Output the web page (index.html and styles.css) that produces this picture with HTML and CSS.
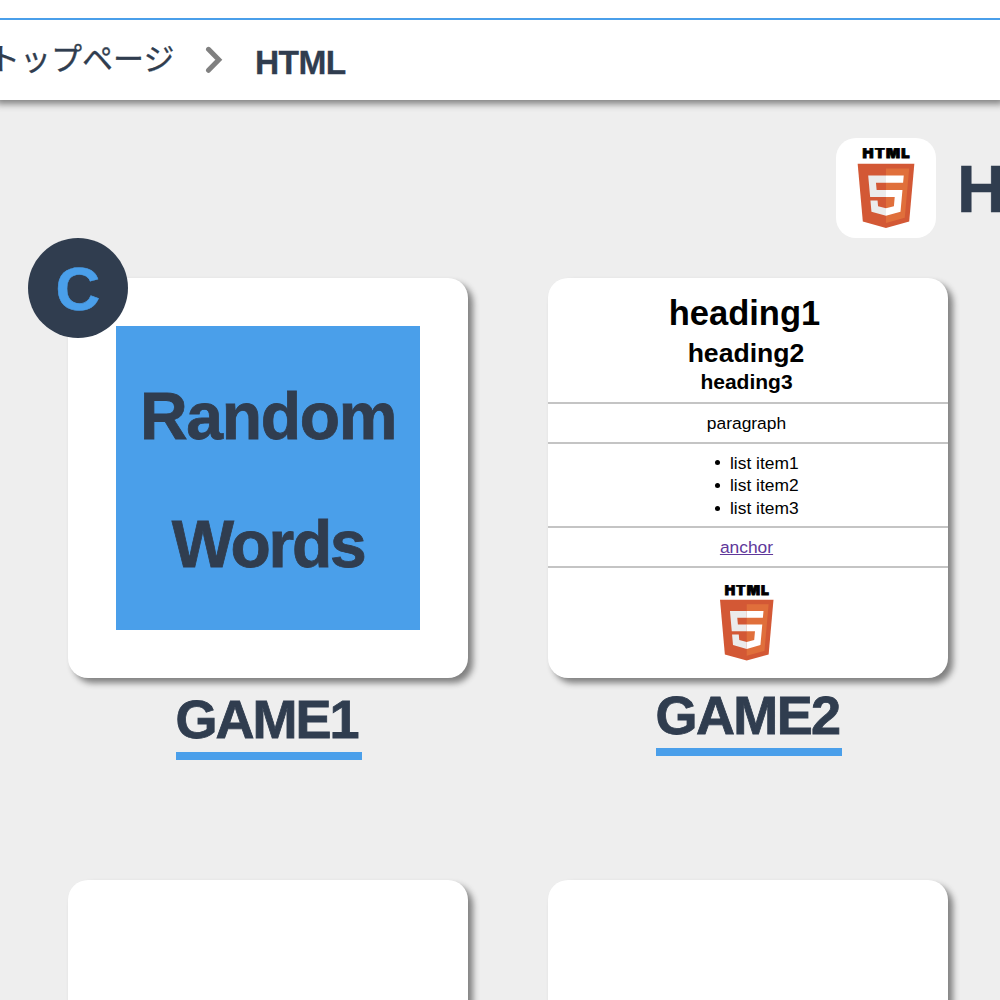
FILE: index.html
```
<!DOCTYPE html>
<html lang="ja">
<head>
<meta charset="utf-8">
<title>HTML</title>
<link rel="stylesheet" href="styles.css">
</head>
<body>
<header class="topbar">
  <nav class="crumbs">
    <a class="crumb-home">トップページ</a>
    <svg class="chevron" width="18" height="28" viewBox="0 0 18 28"><path d="M3.5 3.3l10.3 10.5L3.5 24.3"/></svg>
    <span class="crumb-current">HTML</span>
  </nav>
</header>
<main>
  <div class="title">
    <span class="title-icon">
      <svg width="80" height="80" viewBox="0 0 512 512">
        <text x="256" y="67" text-anchor="middle" textLength="300" class="logo-word">HTML</text>
        <path fill="#d35835" d="M107.6 471 74.6 100.6h362.8l-33 370.2L255.7 512z"/>
        <path fill="#e06f3b" d="M256 480.5V131h148.3L376 447z"/>
        <path fill="#ebebeb" d="M142 176.3h114v45.4h-64.2l4.2 46.5h60v45.3H154.4zM156.4 336.3H202l3.2 36.3 50.8 13.6v47.4l-93.2-26z"/>
        <path fill="#fff" d="M369.6 176.3H255.8v45.4h109.6zM361.3 268.2H255.8v45.4h56l-5.3 59-50.7 13.6v47.2l93-25.8z"/>
      </svg>
    </span>
    <h1>HTML</h1>
  </div>
  <div class="games">
    <section class="game first">
      <div class="card">
        <span class="badge">C</span>
        <div class="words"><span>Random</span><span class="tight">Words</span></div>
      </div>
      <h2 class="name">GAME1</h2>
    </section>
    <section class="game">
      <div class="card sample">
        <div class="headings">
          <div class="h-one">heading1</div>
          <div class="h-two">heading2</div>
          <div class="h-three">heading3</div>
        </div>
        <p class="row">paragraph</p>
        <ul class="list"><li><span>list item1</span></li><li><span>list item2</span></li><li><span>list item3</span></li></ul>
        <div class="row"><a class="link">anchor</a></div>
        <div class="picture">
          <svg width="75.5" height="75.5" viewBox="0 0 512 512">
            <text x="256" y="67" text-anchor="middle" textLength="300" class="logo-word">HTML</text>
            <path fill="#d35835" d="M107.6 471 74.6 100.6h362.8l-33 370.2L255.7 512z"/>
            <path fill="#e06f3b" d="M256 480.5V131h148.3L376 447z"/>
            <path fill="#ebebeb" d="M142 176.3h114v45.4h-64.2l4.2 46.5h60v45.3H154.4zM156.4 336.3H202l3.2 36.3 50.8 13.6v47.4l-93.2-26z"/>
            <path fill="#fff" d="M369.6 176.3H255.8v45.4h109.6zM361.3 268.2H255.8v45.4h56l-5.3 59-50.7 13.6v47.2l93-25.8z"/>
          </svg>
        </div>
      </div>
      <h2 class="name">GAME2</h2>
    </section>
    <section class="game"><div class="card"></div></section>
    <section class="game"><div class="card"></div></section>
  </div>
</main>
</body>
</html>
```
FILE: styles.css
```
* { box-sizing: border-box; }
html, body { height: 100%; }
body {
  margin: 0;
  overflow: hidden;
  background: #eee;
  color: #303d4f;
  font-family: "Liberation Sans", "Noto Sans CJK JP", sans-serif;
}
h1, h2, p, ul { margin: 0; padding: 0; font-weight: bold; }
.logo-word { font: 900 94px Inter, sans-serif; fill: #000; stroke: #000; stroke-width: 6px; }
.topbar {
  height: 100px;
  padding-top: 18px;
  background: #fff;
  box-shadow: 0 0 7px 4px #808080;
}
.crumbs {
  display: flex;
  align-items: flex-start;
  height: 82px;
  border-top: 2px solid #4a9fea;
}
.crumb-home {
  width: 202px;
  margin-left: -11px;
  padding-top: 14px;
  font: 31px/46px "Noto Sans CJK JP", sans-serif;
  white-space: nowrap;
  -webkit-text-stroke: .3px;
}
.chevron { margin: 26px 32px 0 14px; }
.chevron path { fill: none; stroke: #808080; stroke-width: 5; stroke-linecap: round; }
.crumb-current {
  padding-top: 24px;
  font-size: 33.5px;
  line-height: 38px;
  font-weight: bold;
  letter-spacing: -.6px;
  -webkit-text-stroke: .3px;
}
main { padding-top: 38px; }
.title { display: flex; height: 100px; margin-left: 836px; width: 400px; gap: 21px; }
.title-icon {
  display: flex;
  align-items: center;
  justify-content: center;
  width: 100px;
  border-radius: 20px;
  background: #fff;
}
.title h1 { font-size: 67px; line-height: 102px; -webkit-text-stroke: .6px; }
.games {
  display: grid;
  grid-template-columns: 400px 400px;
  grid-auto-rows: 400px;
  gap: 202px 80px;
  padding: 40px 68px;
}
.card {
  position: relative;
  width: 400px;
  height: 400px;
  border-radius: 20px;
  background: #fff;
  box-shadow: 5px 5px 6px #808080;
}
.badge {
  position: absolute;
  left: -40px;
  top: -40px;
  width: 100px;
  height: 100px;
  border-radius: 50%;
  background: #303d4f;
  color: #4a9fea;
  font-size: 62px;
  font-weight: bold;
  line-height: 101px;
  text-align: center;
  -webkit-text-stroke: .5px;
}
.first .card { padding: 48px; }
.words {
  display: flex;
  flex-direction: column;
  height: 304px;
  padding-top: 26px;
  background: #4a9fea;
  font-size: 66px;
  font-weight: bold;
  line-height: 128px;
  letter-spacing: -1.3px;
  text-align: center;
  -webkit-text-stroke: .8px;
}
.tight { letter-spacing: -2.3px; }
.name {
  width: 186px;
  height: 72px;
  margin: 6px 0 0 108px;
  border-bottom: 8px solid #4a9fea;
  font-size: 54px;
  line-height: 63px;
  letter-spacing: -1.6px;
  text-indent: -.5px;
  white-space: nowrap;
  -webkit-text-stroke: .8px;
}
.first .name { margin-top: 10px; letter-spacing: -2px; }
.sample { color: #000; overflow: hidden; text-align: center; font-size: 17.4px; }
.headings { height: 126px; padding-top: 15px; padding-right: 7px; border-bottom: 2px solid #c4c4c4; font-weight: bold; }
.h-one { font-size: 34.5px; line-height: 41px; }
.h-two { padding-left: 3px; font-size: 26.6px; line-height: 38px; }
.h-three { padding-left: 4px; font-size: 21px; line-height: 20px; }
.row { height: 40px; padding-right: 3px; border-bottom: 2px solid #c4c4c4; line-height: 38px; font-weight: normal; }
.list { display: flex; flex-direction: column; height: 84px; padding: 7.5px 0 0 167px; border-bottom: 2px solid #c4c4c4; list-style: none; font-weight: normal; line-height: 22.7px; text-align: left; }
.list li { display: flex; align-items: center; gap: 10px; }
.list li::before { content: ""; width: 5px; height: 5px; border-radius: 50%; background: #000; }
.link { color: #60389a; text-decoration: underline; }
.picture { padding: 17px 2px 0 0; }
```
